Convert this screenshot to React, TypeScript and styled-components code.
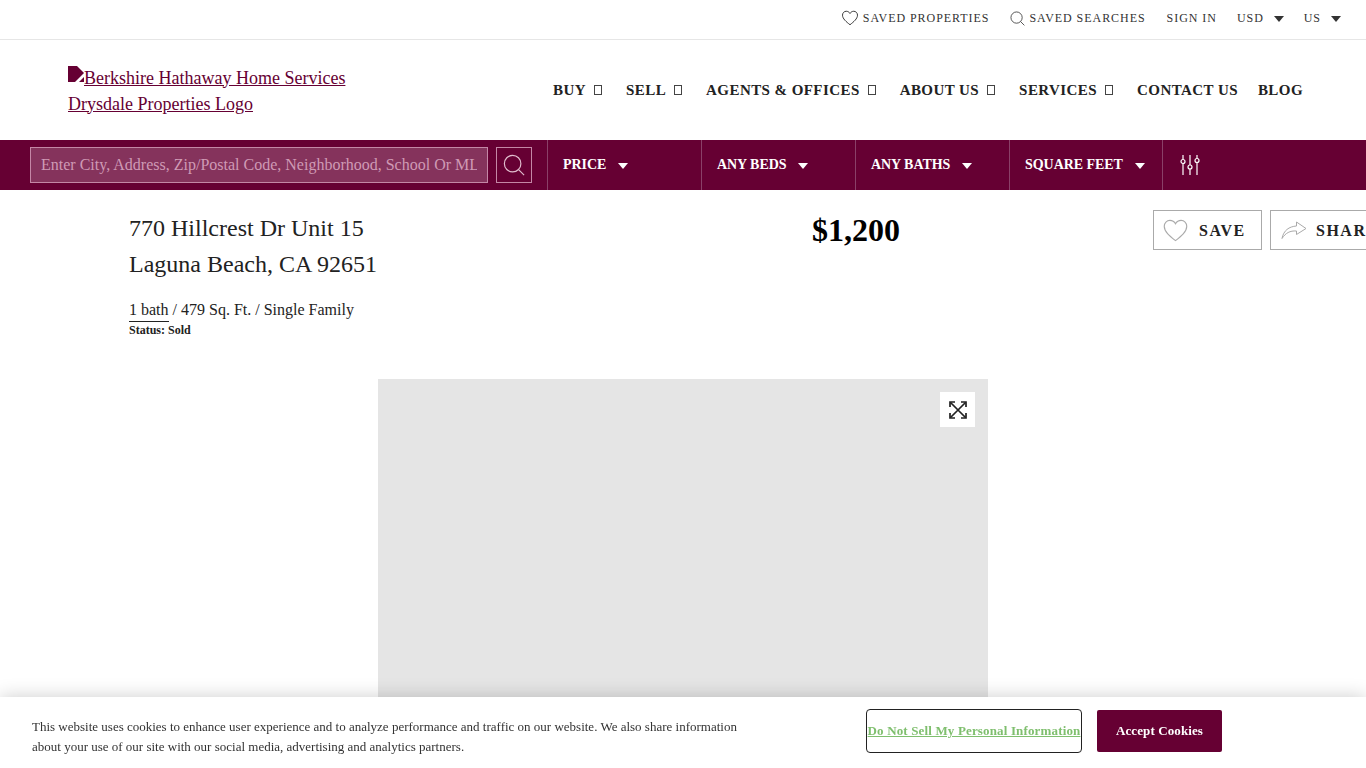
import React from "react";
import styled, { createGlobalStyle } from "styled-components";

const plum = "#660033";

const GlobalStyle = createGlobalStyle`
  html, body {
    margin: 0;
    padding: 0;
    height: 100%;
    overflow: hidden;
    background: #fff;
    font-family: "Liberation Serif", "Times New Roman", serif;
    color: #222;
  }
  * { box-sizing: border-box; }
`;

const Page = styled.div`
  width: 1366px;
  height: 768px;
  overflow: hidden;
  position: relative;
`;

/* ---------------------------------------------------------------------------- */

const TopBar = styled.div`
  height: 40px;
  border-bottom: 1px solid #e6e6e6;
  display: flex;
  align-items: center;
  justify-content: flex-end;
  padding: 0 25px 3px 0;
  font-size: 12px;
  letter-spacing: 0.95px;
  color: #333;
`;

const TopLink = styled.a<{ $gap?: number }>`
  display: flex;
  align-items: center;
  gap: 4px;
  margin-left: ${(p) => p.$gap ?? 20}px;
  white-space: nowrap;
`;

const Caret = styled.span<{ $color?: string; $gap?: number }>`
  display: inline-block;
  width: 0;
  height: 0;
  margin-left: ${(p) => p.$gap ?? 12}px;
  margin-top: 1px;
  border-left: 5px solid transparent;
  border-right: 5px solid transparent;
  border-top: 6px solid ${(p) => p.$color ?? "#333"};
`;

/* ---------------------------------------------------------------------------- */

const MainHeader = styled.header`
  height: 100px;
  display: flex;
  align-items: center;
  justify-content: space-between;
  padding: 0 63px 0 68px;
`;

const LogoLink = styled.a`
  display: block;
  width: 290px;
  font-size: 18px;
  line-height: 26px;
  color: ${plum};
  text-decoration: underline;
  margin-top: 1px;
`;

const BrokenImage = styled.svg`
  display: inline-block;
  width: 16px;
  height: 16px;
  vertical-align: 2px;
`;

const Nav = styled.nav`
  display: flex;
  align-items: center;
  gap: 20px;
  font-size: 15px;
  font-weight: 700;
  letter-spacing: 0.43px;
  color: #222;
`;

const NavItem = styled.a`
  display: flex;
  align-items: center;
  white-space: nowrap;
`;

const Tofu = styled.span`
  display: inline-block;
  width: 8px;
  height: 10px;
  margin: 0 4px 0 8px;
  border: 1px solid #444;
`;

/* ---------------------------------------------------------------------------- */

const SearchBar = styled.div`
  height: 50px;
  background: ${plum};
  display: flex;
  align-items: stretch;
  padding-left: 30px;
`;

const SearchField = styled.input`
  width: 458px;
  height: 36px;
  margin: 7px 0 0;
  padding: 0 10px;
  background: #85335c;
  border: 1px solid #c487a6;
  border-radius: 0;
  outline: 0;
  font-family: inherit;
  font-size: 16px;

  &::placeholder {
    color: #cf9ab5;
    opacity: 1;
  }
`;

const SearchButton = styled.div`
  width: 36px;
  height: 36px;
  margin: 7px 15px 0 8px;
  border: 1px solid #c487a6;
  display: flex;
  align-items: center;
  justify-content: center;
`;

const FilterCell = styled.div<{ $width?: number }>`
  width: ${(p) => p.$width ?? 154}px;
  border-left: 1px solid #8a4068;
  padding-left: 15px;
  display: flex;
  align-items: center;
  color: #fff;
  font-size: 14px;
  font-weight: 700;
  letter-spacing: -0.05px;
  white-space: nowrap;
`;

const SlidersCell = styled(FilterCell)`
  padding-left: 16px;
`;

/* ---------------------------------------------------------------------------- */

const Summary = styled.section`
  display: grid;
  grid-template-columns: 683px 341px auto;
  padding: 20px 0 0 129px;
  height: 189px;
`;

const Address = styled.h1`
  margin: 0;
  font-size: 24px;
  font-weight: 400;
  line-height: 36px;
  color: #222;
`;

const Specs = styled.div`
  margin-top: 18px;
  font-size: 16px;
  line-height: 20px;
  color: #222;
`;

const BathCount = styled.span`
  display: inline-block;
  border-bottom: 1px solid #222;
  height: 22px;
`;

const Status = styled.div`
  font-size: 12px;
  font-weight: 700;
  line-height: 14px;
  margin-top: 1px;
  color: #222;
`;

const Price = styled.div`
  font-size: 32px;
  font-weight: 700;
  line-height: 40px;
  color: #000;
`;

const Actions = styled.div`
  display: flex;
  gap: 8px;
  align-items: flex-start;
`;

const ActionButton = styled.button<{ $width: number; $gap: number; $pad: number }>`
  width: ${(p) => p.$width}px;
  flex: none;
  height: 40px;
  padding: 2px 0 0 ${(p) => p.$pad}px;
  background: #fff;
  border: 1px solid #aaa;
  display: flex;
  align-items: center;
  gap: ${(p) => p.$gap}px;
  font-family: inherit;
  font-size: 16px;
  font-weight: 700;
  letter-spacing: 1.5px;
  color: #222;

  svg {
    margin-top: -2px;
  }
`;

const Gallery = styled.div`
  width: 610px;
  height: 400px;
  margin: 0 auto;
  background: #e5e5e5;
  position: relative;
`;

const ExpandButton = styled.div`
  position: absolute;
  top: 13px;
  right: 13px;
  width: 35px;
  height: 35px;
  background: #fff;
  display: flex;
  align-items: center;
  justify-content: center;
`;

/* ---------------------------------------------------------------------------- */

const CookieBanner = styled.div`
  position: fixed;
  left: 0;
  right: 0;
  bottom: 0;
  height: 71px;
  background: #fff;
  box-shadow: 0 0 18px rgba(0, 0, 0, 0.2);
  display: flex;
  align-items: center;
  padding: 0 144px 0 32px;
`;

const CookieText = styled.p`
  margin: 8px 0 0;
  width: 720px;
  font-size: 13px;
  line-height: 20px;
  color: #333;
`;

const CookieActions = styled.div`
  margin: -4px 0 0 auto;
  display: flex;
  align-items: center;
  gap: 15px;
`;

const SettingsButton = styled.button`
  width: 216px;
  height: 44px;
  padding: 0;
  background: #fff;
  border: 1px solid #222;
  border-radius: 4px;
  font-family: inherit;
  font-size: 13px;
  font-weight: 700;
  letter-spacing: 0.15px;
  white-space: nowrap;
  color: #7fbf6e;
  text-decoration: underline;
`;

const AcceptButton = styled.button`
  width: 125px;
  height: 42px;
  padding: 0;
  background: ${plum};
  border: 0;
  border-radius: 2px;
  font-family: inherit;
  font-size: 13px;
  font-weight: 700;
  letter-spacing: 0.1px;
  color: #fff;
`;

/* ---------------------------------------------------------------------------- */

const HeartIcon = ({ size, color }: { size: number; color: string }) => (
  <svg width={size} height={size} viewBox="0 0 24 24" fill="none" stroke={color} strokeWidth={size > 20 ? 1 : 1.3}>
    <path d="M12 21C7 17 2 13 2 8.2 2 5.2 4.3 3 7 3c2 0 3.900 1 5 3 1.100-2 3-3 5-3 2.700 0 5 2.200 5 5.200C22 13 17 17 12 21z" />
  </svg>
);

const SearchIcon = ({ size, color }: { size: number; color: string }) => (
  <svg width={size} height={size} viewBox="0 0 24 24" fill="none" stroke={color} strokeWidth={1.3}>
    <circle cx="10.5" cy="10.5" r="9" />
    <path d="M17 17l6 6" />
  </svg>
);

const SlidersIcon = () => (
  <svg width="22" height="22" viewBox="0 0 22 22" fill="none" stroke="#fff" strokeWidth="1.2">
    <path d="M4 1v4.500M4 9.500V21M11 1v10M11 15v6M18 1v3.500M18 8.500V21" />
    <circle cx="4" cy="7.500" r="2" />
    <circle cx="11" cy="13" r="2" />
    <circle cx="18" cy="6.500" r="2" />
  </svg>
);

const ShareIcon = () => (
  <svg width="26" height="20" viewBox="0 0 26 20" fill="none" stroke="#aaa" strokeWidth="1">
    <path d="M15.500 2L25 8.500 15.500 14.500V11C9 10.500 4.500 13 1 18.500 2.500 10.500 8 6.500 15.500 6z" />
  </svg>
);

const ExpandIcon = () => (
  <svg width="20" height="20" viewBox="0 0 20 20" fill="none" stroke="#222" strokeWidth="1.700">
    <path d="M2.500 2.500l15 15M17.500 2.500l-15 15" />
    <path d="M2 7V2h5M13 2h5v5M18 13v5h-5M7 18H2v-5" />
  </svg>
);

const navItems = ["BUY", "SELL", "AGENTS & OFFICES", "ABOUT US", "SERVICES"];
const filters = ["PRICE", "ANY BEDS", "ANY BATHS"];

export default function App() {
  return (
    <Page>
      <GlobalStyle />
      <TopBar>
        <TopLink>
          <HeartIcon size={18} color="#333" />
          SAVED PROPERTIES
        </TopLink>
        <TopLink $gap={21}>
          <SearchIcon size={15} color="#333" />
          SAVED SEARCHES
        </TopLink>
        <TopLink $gap={21}>SIGN IN</TopLink>
        <TopLink>
          USD
          <Caret $gap={6} />
        </TopLink>
        <TopLink>
          US
          <Caret $gap={6} />
        </TopLink>
      </TopBar>

      <MainHeader>
        <LogoLink>
          <BrokenImage viewBox="0 0 16 16">
            <path d="M0 0h9l7 7-9 9H0z" fill={plum} />
            <path d="M11 16l5-5v5z" fill={plum} />
          </BrokenImage>
          Berkshire Hathaway Home Services Drysdale Properties Logo
        </LogoLink>
        <Nav>
          {navItems.map((item) => (
            <NavItem key={item}>
              {item}
              <Tofu />
            </NavItem>
          ))}
          <NavItem>CONTACT US</NavItem>
          <NavItem>BLOG</NavItem>
        </Nav>
      </MainHeader>

      <SearchBar>
        <SearchField placeholder="Enter City, Address, Zip/Postal Code, Neighborhood, School Or MLS#" />
        <SearchButton>
          <SearchIcon size={22} color="#e0bccd" />
        </SearchButton>
        {filters.map((label) => (
          <FilterCell key={label}>
            {label}
            <Caret $color="#fff" />
          </FilterCell>
        ))}
        <FilterCell $width={153}>
          SQUARE FEET
          <Caret $color="#fff" />
        </FilterCell>
        <SlidersCell>
          <SlidersIcon />
        </SlidersCell>
      </SearchBar>

      <Summary>
        <div>
          <Address>
            770 Hillcrest Dr Unit 15
            <br />
            Laguna Beach, CA 92651
          </Address>
          <Specs>
            <BathCount>1 bath</BathCount> / 479 Sq. Ft. / Single Family
          </Specs>
          <Status>Status: Sold</Status>
        </div>
        <Price>$1,200</Price>
        <Actions>
          <ActionButton $width={109} $gap={10} $pad={8}>
            <HeartIcon size={27} color="#aaa" />
            SAVE
          </ActionButton>
          <ActionButton $width={120} $gap={9} $pad={10}>
            <ShareIcon />
            SHARE
          </ActionButton>
        </Actions>
      </Summary>

      <Gallery>
        <ExpandButton>
          <ExpandIcon />
        </ExpandButton>
      </Gallery>

      <CookieBanner>
        <CookieText>
          This website uses cookies to enhance user experience and to analyze performance and traffic on our website.
          We also share information about your use of our site with our social media, advertising and analytics
          partners.
        </CookieText>
        <CookieActions>
          <SettingsButton>Do Not Sell My Personal Information</SettingsButton>
          <AcceptButton>Accept Cookies</AcceptButton>
        </CookieActions>
      </CookieBanner>
    </Page>
  );
}
